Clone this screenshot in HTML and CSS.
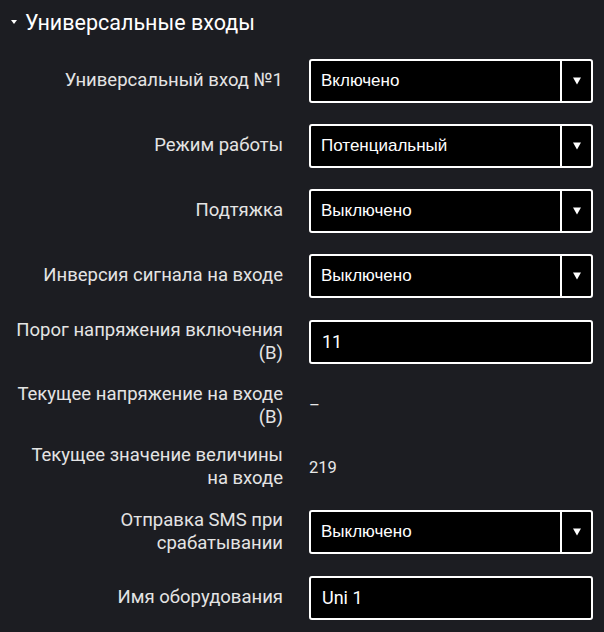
FILE: index.html
```html
<!DOCTYPE html>
<html lang="ru">
    <head>
        <meta charset="UTF-8" />
        <meta name="viewport" content="width=device-width, initial-scale=1.0" />
        <title>Универсальные входы</title>
        <link rel="stylesheet" href="styles.css">
    </head>
    <body>
        <div class="section">
            <!-- заголовок секции -->
            <div class="section-title">
                <span class="caret"></span>
                <span>Универсальные входы</span>
            </div>

            <div class="form">
                <div class="row">
                    <label class="label">Универсальный вход №1</label>
                    <div class="select">
                        <span class="select-value">Включено</span>
                        <span class="select-arrow"></span>
                    </div>
                </div>

                <div class="row">
                    <label class="label">Режим работы</label>
                    <div class="select">
                        <span class="select-value">Потенциальный</span>
                        <span class="select-arrow"></span>
                    </div>
                </div>

                <div class="row">
                    <label class="label">Подтяжка</label>
                    <div class="select">
                        <span class="select-value">Выключено</span>
                        <span class="select-arrow"></span>
                    </div>
                </div>

                <div class="row">
                    <label class="label">Инверсия сигнала на входе</label>
                    <div class="select">
                        <span class="select-value">Выключено</span>
                        <span class="select-arrow"></span>
                    </div>
                </div>

                <div class="row">
                    <label class="label">Порог напряжения включения (В)</label>
                    <div class="input">11</div>
                </div>

                <div class="row static">
                    <label class="label">Текущее напряжение на входе (В)</label>
                    <div class="value">–</div>
                </div>

                <div class="row static">
                    <label class="label">Текущее значение величины на входе</label>
                    <div class="value">219</div>
                </div>

                <div class="row">
                    <label class="label">Отправка SMS при срабатывании</label>
                    <div class="select">
                        <span class="select-value">Выключено</span>
                        <span class="select-arrow"></span>
                    </div>
                </div>

                <div class="row">
                    <label class="label">Имя оборудования</label>
                    <div class="input">Uni 1</div>
                </div>
            </div>
        </div>
    </body>
</html>
```

FILE: styles.css
```css
body {
    margin: 0;
    padding: 0;
    background-color: #1c1d22;
    color: #e4e4e4;
    font-family: Roboto, "Noto Sans", sans-serif;
}

.section {
    padding-top: 8px;
}

.section-title {
    display: flex;
    align-items: center;
    height: 28px;
    padding-left: 11px;
    font-size: 21.5px;
    color: #fff;
}

.caret {
    width: 0;
    height: 0;
    margin-right: 8px;
    border-left: 3px solid transparent;
    border-right: 3px solid transparent;
    border-top: 4px solid #fff;
}

.form {
    padding-top: 12px;
}

.row {
    display: grid;
    grid-template-columns: 272px 284px;
    column-gap: 26px;
    align-items: center;
    padding: 10.5px 0 10.5px 11px;
    min-height: 44px;
}

.row.static {
    padding-top: 7.75px;
    padding-bottom: 7.75px;
}

.label {
    text-align: right;
    font-size: 18.5px;
    line-height: 23px;
}

.select,
.input {
    box-sizing: border-box;
    height: 44px;
    border: 2px solid #fff;
    border-radius: 3px;
    background-color: #000;
    color: #fff;
}

.select {
    display: flex;
    align-items: center;
}

.select-value {
    flex: 1;
    padding-left: 10px;
    font-family: "Liberation Sans", Arial, sans-serif;
    font-size: 17px;
}

.select-arrow {
    position: relative;
    width: 29px;
    height: 100%;
    border-left: 2px solid #fff;
}

.select-arrow::after {
    content: "";
    position: absolute;
    top: 50%;
    left: 50%;
    transform: translate(-50%, -50%);
    border-left: 4px solid transparent;
    border-right: 4px solid transparent;
    border-top: 7px solid #fff;
}

.input {
    display: flex;
    align-items: center;
    padding-left: 11px;
    font-size: 18px;
}

.value {
    font-size: 16.5px;
    color: #e8e8e8;
}
```
